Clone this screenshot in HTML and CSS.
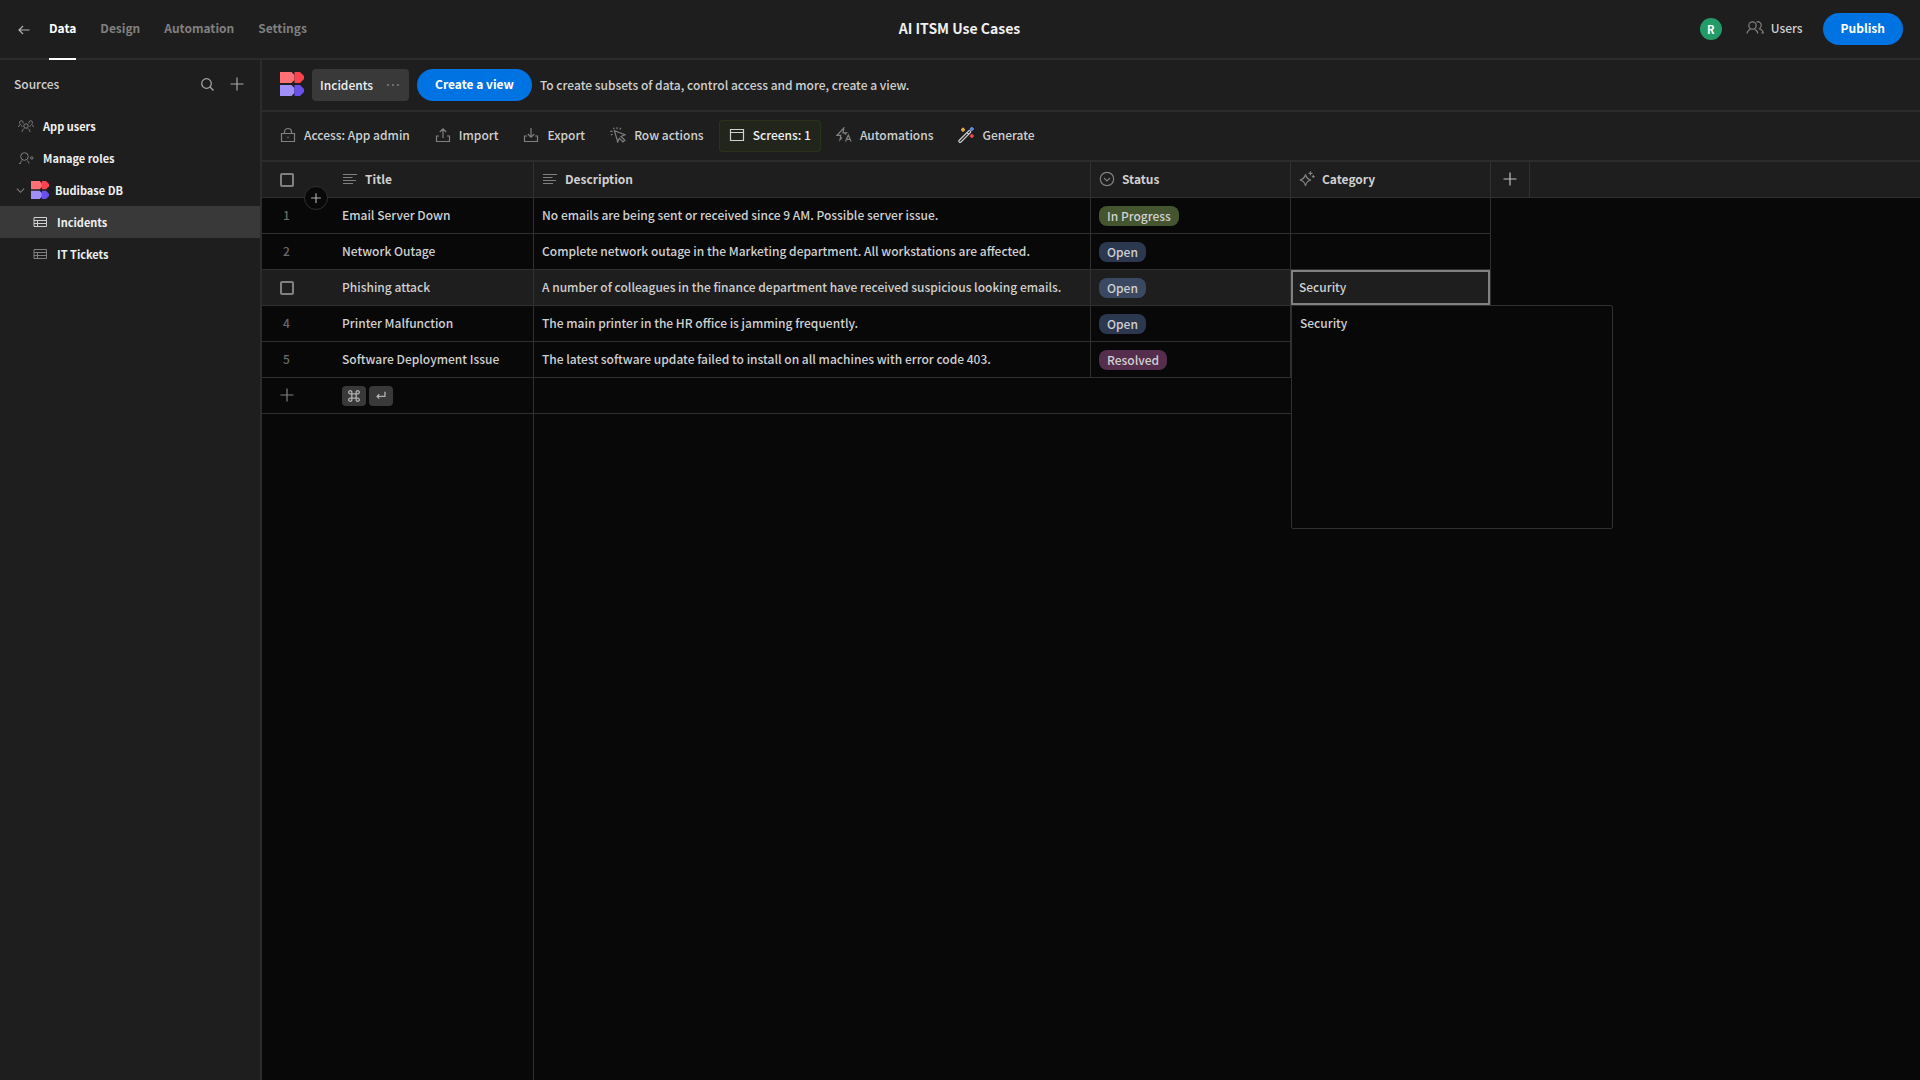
FILE: index.html
```html
<!DOCTYPE html>
<html lang="en">
<head>
  <meta charset="UTF-8" />
  <title>AI ITSM Use Cases</title>
  <meta name="viewport" content="width=device-width, initial-scale=1.0"/>
  <link rel="stylesheet" href="styles.css">
</head>
<body>

  <svg class="defs" aria-hidden="true">
    <symbol id="logo" viewBox="0 0 24 24">
      <path d="M0 0h11.500l3 3v5l-3 3H0z" fill="#ff7177"/>
      <path d="M14.500 0H20l4 4v3l-4 4h-5.500V8z" fill="#fc4451"/>
      <path d="M0 13h11.500l3 3v5l-3 3H0z" fill="#9f8ff7"/>
      <path d="M14.500 13H20l4 4v3l-4 4h-5.500v-3z" fill="#6a51ec"/>
    </symbol>
    <symbol id="plus" viewBox="0 0 16 16">
      <path d="M8 1.500v13M1.500 8h13"/>
    </symbol>
    <symbol id="text" viewBox="0 0 16 16">
      <path d="M1 3.500h14M1 6.500h9.500M1 9.500h13M1 12.500h10"/>
    </symbol>
    <symbol id="table" viewBox="0 0 16 16">
      <path d="M2 3.500h12.500v9H2zM2 6.500h12.500M2 9.500h12.500M5.500 6.500v6"/>
    </symbol>
  </svg>

  <header class="top-nav">
    <nav class="tabs">
      <a class="back" href="#" aria-label="Back">
        <svg class="icon" viewBox="0 0 16 16"><path d="M13.500 8H3.500M7 4L3 8l4 4"/></svg>
      </a>
      <a class="tab active" href="#">Data</a>
      <a class="tab" href="#">Design</a>
      <a class="tab" href="#">Automation</a>
      <a class="tab" href="#">Settings</a>
    </nav>
    <h1>AI ITSM Use Cases</h1>
    <div class="actions">
      <span class="avatar">R</span>
      <button class="users" type="button">
        <svg class="icon users-icon" viewBox="0 0 18 16">
          <circle cx="6.500" cy="5.500" r="3.700"/>
          <path d="M1 13.500c.2-2.500 1.500-3.500 3.500-4.500M8.500 9c2 1 3 2 3.300 4.500M10.500 2.200c2.200-1.300 4.700.3 4.700 2.900 0 1.800-.7 3-1.700 3.700 2 .8 3.500 1.700 3.800 4.200h-2"/>
        </svg>
        Users
      </button>
      <button class="cta" type="button">Publish</button>
    </div>
  </header>

  <div class="layout">
    <aside class="sidebar">
      <div class="sidebar-head">
        <h2>Sources</h2>
        <button type="button" aria-label="Search">
          <svg class="icon" viewBox="0 0 16 16"><circle cx="7.500" cy="7.500" r="4.800"/><path d="M11 11l3.500 3.500"/></svg>
        </button>
        <button type="button" aria-label="Add source">
          <svg class="icon"><use href="#plus"/></svg>
        </button>
      </div>
      <nav class="sources">
        <a class="source" href="#">
          <svg class="icon small" viewBox="0 0 16 16">
            <circle cx="8" cy="8" r="2.200"/>
            <path d="M4 14c.2-2 1.200-3 2.500-3.800M12 14c-.2-2-1.200-3-2.500-3.800M5 5.500c1-2.500-2.500-4-3.300-1.500-.3 1.200.1 2 .8 2.500-1 .5-1.800 1.300-2 2.500M11 5.500c-1-2.500 2.500-4 3.300-1.500.3 1.200-.1 2-.8 2.500 1 .5 1.800 1.300 2 2.500M3 7.500l1.500 1M13 7.500l-1.500 1"/>
          </svg>
          App users
        </a>
        <a class="source" href="#">
          <svg class="icon small" viewBox="0 0 16 16">
            <circle cx="6.500" cy="6.500" r="3.800"/>
            <path d="M1 13.500h1.500c.2-2 1-2.800 2-3.500M9 10.500c1 .7 1.800 1.500 2 3"/>
            <circle cx="13.800" cy="8" r="1.200"/>
          </svg>
          Manage roles
        </a>
        <a class="source datasource" href="#">
          <svg class="icon chevron" viewBox="0 0 10 10"><path d="M1 3l4 4 4-4"/></svg>
          <svg class="db-logo"><use href="#logo"/></svg>
          Budibase DB
        </a>
        <a class="source child selected" href="#">
          <svg class="icon small"><use href="#table"/></svg>
          Incidents
        </a>
        <a class="source child" href="#">
          <svg class="icon small"><use href="#table"/></svg>
          IT Tickets
        </a>
      </nav>
    </aside>

    <main class="content">
      <div class="view-bar">
        <svg class="logo"><use href="#logo"/></svg>
        <button class="view-tab" type="button">
          Incidents
          <svg class="dots" viewBox="0 0 16 16"><circle cx="3" cy="8" r="1"/><circle cx="8" cy="8" r="1"/><circle cx="13" cy="8" r="1"/></svg>
        </button>
        <button class="cta" type="button">Create a view</button>
        <p>To create subsets of data, control access and more, create a view.</p>
      </div>

      <div class="toolbar">
        <button type="button">
          <svg class="icon" viewBox="0 0 16 16"><path d="M1.500 6.500h13v8h-13zM4.500 6.500V5c0-4.700 7-4.700 7 0v1.500M8 9.800v1.500"/></svg>
          Access: App admin
        </button>
        <button type="button">
          <svg class="icon" viewBox="0 0 16 16"><path d="M4 9H1.500v5.500h13V9H12M8 11V2M4.800 5L8 1.800 11.200 5"/></svg>
          Import
        </button>
        <button type="button">
          <svg class="icon" viewBox="0 0 16 16"><path d="M4 9H1.500v5.500h13V9H12M8 1v9M4.800 7L8 10.200 11.200 7"/></svg>
          Export
        </button>
        <button type="button">
          <svg class="icon" viewBox="0 0 16 16"><path d="M4.500 3.800l10.500 4-4 1.700 3.800 3.700-1.800 1.800-3.700-3.800-1.600 3.800zM7 .3v2M10.800.8L9.900 2.500M3.500.8l.8 1.400M.3 4.300h2.200M.8 8l1.800-.8"/></svg>
          Row actions
        </button>
        <button class="screens" type="button">
          <svg class="icon" viewBox="0 0 16 16"><path d="M1.500 2.500h13v11h-13zM1.500 5.500h13"/></svg>
          Screens: 1
        </button>
        <button type="button">
          <svg class="icon" viewBox="0 0 16 16"><path d="M6 10.500l-2 2.200.8-4.400H1L7.800 1 7 5.800h3.500L8.800 7.500M9.500 14.500L12.300 8l2.800 6.500M10.500 12.300h3.600"/></svg>
          Automations
        </button>
        <button type="button">
          <svg class="icon wand" viewBox="0 0 16 16">
            <path d="M1 13.500L11 3.500q2 0 1.500 2L2.500 15.500q-2 0-1.500-2zM9 5.500l1.500 1.500"/>
            <path class="spark yellow" d="M5 .8v4M3 2.800h4"/>
            <path class="spark blue" d="M13.800 0v4M11.800 2h4"/>
            <path class="spark red" d="M13.800 7v4M11.800 9h4"/>
          </svg>
          Generate
        </button>
      </div>

      <div class="grid">
        <table>
          <colgroup>
            <col class="col-index"><col class="col-title"><col class="col-description">
            <col class="col-status"><col class="col-category"><col class="col-add"><col>
          </colgroup>
          <thead>
            <tr>
              <th class="index">
                <input type="checkbox" aria-label="Select all rows">
                <button class="insert" type="button" aria-label="Insert row"><svg class="icon"><use href="#plus"/></svg></button>
              </th>
              <th><span class="label"><svg class="icon"><use href="#text"/></svg>Title</span></th>
              <th><span class="label"><svg class="icon"><use href="#text"/></svg>Description</span></th>
              <th><span class="label"><svg class="icon" viewBox="0 0 16 16"><circle cx="8" cy="8" r="6.700"/><path d="M5 7l3 3 3-3"/></svg>Status</span></th>
              <th><span class="label"><svg class="icon" viewBox="0 0 16 16"><path d="M6.500 3.500q1 4.500 5.500 5.500-4.500 1-5.500 5.800Q5.500 10 .8 9q4.700-1 5.700-5.500zM11.500.3v4M9.500 2.300h4M14.300 4v3M12.800 5.500h3"/></svg>Category</span></th>
              <th class="add"><button type="button" aria-label="Add column"><svg class="icon"><use href="#plus"/></svg></button></th>
              <th class="filler"></th>
            </tr>
          </thead>
          <tbody>
            <tr>
              <td class="index">1</td>
              <td>Email Server Down</td>
              <td>No emails are being sent or received since 9 AM. Possible server issue.</td>
              <td><span class="badge progress">In Progress</span></td>
              <td></td>
            </tr>
            <tr>
              <td class="index">2</td>
              <td>Network Outage</td>
              <td>Complete network outage in the Marketing department. All workstations are affected.</td>
              <td><span class="badge open">Open</span></td>
              <td></td>
            </tr>
            <tr class="hovered">
              <td class="index"><input type="checkbox" aria-label="Select row 3"></td>
              <td>Phishing attack</td>
              <td>A number of colleagues in the finance department have received suspicious looking emails.</td>
              <td><span class="badge open">Open</span></td>
              <td class="focused">
                Security
                <textarea class="popover" aria-label="Category" readonly>Security</textarea>
              </td>
            </tr>
            <tr>
              <td class="index">4</td>
              <td>Printer Malfunction</td>
              <td>The main printer in the HR office is jamming frequently.</td>
              <td><span class="badge open">Open</span></td>
              <td></td>
            </tr>
            <tr>
              <td class="index">5</td>
              <td>Software Deployment Issue</td>
              <td>The latest software update failed to install on all machines with error code 403.</td>
              <td><span class="badge resolved">Resolved</span></td>
              <td></td>
            </tr>
            <tr>
              <td class="index"><button type="button" aria-label="Add row"><svg class="icon"><use href="#plus"/></svg></button></td>
              <td>
                <span class="keys">
                  <kbd><svg class="icon" viewBox="0 0 16 16"><path d="M5.500 5.500h5v5h-5zM5.500 5.500H4A1.800 1.800 0 1 1 5.500 4zM10.500 5.500V4A1.800 1.800 0 1 1 12 5.500zM10.500 10.500H12a1.800 1.800 0 1 1-1.500 1.500zM5.500 10.500V12A1.800 1.800 0 1 1 4 10.500z"/></svg></kbd>
                  <kbd><svg class="icon" viewBox="0 0 16 16"><path d="M12.500 3v5.500h-9M6 6L3.500 8.500 6 11"/></svg></kbd>
                </span>
              </td>
              <td class="blank" colspan="3"></td>
            </tr>
          </tbody>
        </table>
        <div class="sticky-edge"></div>
      </div>
    </main>
  </div>

</body>
</html>
```

FILE: styles.css
```css
* {
  box-sizing: border-box;
}

body {
  margin: 0;
  height: 100vh;
  display: flex;
  flex-direction: column;
  background: #080808;
  color: #d0d0d0;
  font-family: "Noto Sans CJK SC", "Noto Sans", sans-serif;
  font-size: 12px;
  font-weight: 500;
  line-height: 20px;
  overflow: hidden;
}

h1,
h2,
p {
  margin: 0;
}

a {
  color: inherit;
  text-decoration: none;
}

button {
  display: flex;
  align-items: center;
  padding: 0;
  border: none;
  background: none;
  color: inherit;
  font: inherit;
  white-space: nowrap;
  cursor: pointer;
}

.defs {
  display: none;
}

.icon {
  width: 16px;
  height: 16px;
  flex-shrink: 0;
  fill: none;
  stroke: #808080;
  stroke-width: 1.2;
}

.cta {
  height: 32px;
  padding: 0 18px 2px;
  border-radius: 16px;
  background: #0073e3;
  color: white;
  font-weight: bold;
}

/* top bar */

.top-nav {
  display: grid;
  grid-template-columns: 1fr auto 1fr;
  height: 60px;
  flex-shrink: 0;
  padding: 0 17px 0 16px;
  background: #1e1e1e;
  border-bottom: 2px solid #2c2c2c;
}

.top-nav h1 {
  align-self: center;
  padding-bottom: 2px;
  color: #f0f0f0;
  font-size: 14px;
  font-weight: bold;
}

.tabs {
  display: flex;
  gap: 24px;
  margin-bottom: -2px;
}

.back {
  display: flex;
  align-items: center;
  margin-right: -7px;
}

.back .icon {
  stroke: #b0b0b0;
}

.tab {
  display: flex;
  align-items: center;
  height: 60px;
  padding-bottom: 2px;
  border-bottom: 2px solid transparent;
  color: #808080;
  font-weight: bold;
}

.tab.active {
  color: white;
  border-color: white;
}

.actions {
  display: flex;
  align-items: center;
  justify-content: flex-end;
}

.avatar {
  width: 22px;
  height: 22px;
  border-radius: 50%;
  background: #239b69;
  color: white;
  font-size: 11px;
  font-weight: bold;
  line-height: 22px;
  text-align: center;
}

.users {
  gap: 7px;
  margin: 0 20px 0 24px;
  padding-bottom: 2px;
}

.users-icon {
  width: 18px;
}

/* sidebar */

.layout {
  display: flex;
  flex: 1;
  min-height: 0;
}

.sidebar {
  width: 262px;
  flex-shrink: 0;
  background: #1e1e1e;
  border-right: 2px solid #2c2c2c;
}

.sidebar-head {
  display: flex;
  align-items: center;
  gap: 14px;
  height: 50px;
  padding: 0 15px 3px 14px;
}

.sidebar-head h2 {
  flex: 1;
  font-size: 12px;
  font-weight: 500;
}

.sidebar-head .icon {
  stroke: #a8a8a8;
}

.source {
  display: flex;
  align-items: center;
  gap: 9px;
  height: 32px;
  padding-left: 18px;
  color: #f0f0f0;
  font-size: 11px;
  font-weight: bold;
}

.small {
  stroke-width: 1;
}

.datasource {
  gap: 6px;
  padding-left: 16px;
}

.chevron {
  width: 9px;
  height: 9px;
}

.db-logo {
  width: 18px;
  height: 18px;
}

.child {
  padding-left: 32px;
}

.selected {
  background: #393939;
}

.selected .icon {
  stroke: #d0d0d0;
}

/* view bar and toolbar */

.content {
  display: flex;
  flex-direction: column;
  flex: 1;
  min-width: 0;
}

.view-bar {
  display: flex;
  align-items: center;
  gap: 8px;
  height: 52px;
  padding: 0 18px;
  background: #1e1e1e;
  border-bottom: 2px solid #2c2c2c;
}

.logo {
  width: 24px;
  height: 24px;
  margin-bottom: 3px;
}

.view-tab {
  gap: 12px;
  height: 32px;
  padding: 0 8px;
  border-radius: 4px;
  background: #393939;
  color: #f0f0f0;
}

.dots {
  width: 16px;
  height: 16px;
  fill: #808080;
}

.toolbar {
  display: flex;
  align-items: center;
  gap: 5px;
  height: 50px;
  padding: 0 8px;
  background: #1e1e1e;
  border-bottom: 2px solid #2c2c2c;
}

.toolbar button {
  gap: 8px;
  height: 32px;
  padding: 0 10px 2px;
  border-radius: 4px;
}

.toolbar .screens {
  background: #22251c;
  box-shadow: inset 0 0 0 1px #2c331b;
  color: #f0f0f0;
}

.screens .icon,
.wand {
  stroke: #d0d0d0;
}

.spark {
  stroke-width: 2;
}

.yellow {
  stroke: #d9a93a;
}

.blue {
  stroke: #5f86e0;
}

.red {
  stroke: #dc4a48;
}

/* data grid */

.grid {
  display: flex;
  flex-direction: column;
  flex: 1;
}

table {
  width: 100%;
  table-layout: fixed;
  border-spacing: 0;
}

.col-index {
  width: 72px;
}

.col-title {
  width: 200px;
}

.col-description {
  width: 557px;
}

.col-status,
.col-category {
  width: 200px;
}

.col-add {
  width: 39px;
}

th,
td {
  position: relative;
  height: 36px;
  padding: 0 8px 2px;
  border-right: 1px solid #303030;
  border-bottom: 1px solid #303030;
  text-align: left;
  white-space: nowrap;
}

th {
  background: #1e1e1e;
  font-weight: bold;
}

th.index,
td.index {
  padding-left: 18px;
  border-right: none;
}

td.index {
  padding-left: 21px;
  color: #6a6a6a;
}

tr:last-child td.index {
  padding-left: 17px;
}

th.index,
.hovered td.index {
  padding-left: 18px;
  padding-bottom: 0;
}

th.filler,
td.blank {
  border-right: none;
}

.label {
  display: flex;
  align-items: center;
  gap: 7px;
}

.add button {
  margin: 0 auto;
}

.add .icon {
  stroke: #c0c0c0;
}

input[type="checkbox"] {
  display: block;
  appearance: none;
  width: 14px;
  height: 14px;
  margin: 0;
  border: 2px solid #808080;
  border-radius: 2px;
}

.insert {
  position: absolute;
  left: 42px;
  bottom: -13px;
  z-index: 1;
  justify-content: center;
  width: 24px;
  height: 24px;
  border: 1px solid #303030;
  border-radius: 50%;
  background: #080808;
}

.insert .icon {
  width: 12px;
  height: 12px;
  stroke: #b0b0b0;
  stroke-width: 1.5;
}

.hovered td {
  background: #1e1e1e;
}

.badge {
  display: block;
  width: fit-content;
  height: 20px;
  margin-top: 3px;
  padding: 0 8px;
  border-radius: 8px;
}

.progress {
  background: #44552f;
}

.open {
  background: #2b3850;
}

.hovered .open {
  background: #3a4861;
}

.resolved {
  background: #552d4d;
}

.focused {
  box-shadow: inset 0 0 0 2px #808080;
}

.popover {
  position: absolute;
  top: 35px;
  left: 0;
  z-index: 2;
  width: 322px;
  height: 224px;
  padding: 7px 8px;
  border: 1px solid #303030;
  border-radius: 2px;
  outline: none;
  background: #080808;
  color: inherit;
  font: inherit;
  resize: none;
}

.keys {
  display: flex;
  gap: 3px;
  margin-top: 3px;
}

kbd {
  display: flex;
  align-items: center;
  justify-content: center;
  width: 24px;
  height: 20px;
  border-radius: 4px;
  background: #393939;
}

kbd .icon {
  width: 14px;
  height: 14px;
  stroke: #b0b0b0;
  stroke-width: 1.5;
}

/* carries the frozen column border down to the bottom of the page */
.sticky-edge {
  flex: 1;
  width: 272px;
  border-right: 1px solid #303030;
}
```
